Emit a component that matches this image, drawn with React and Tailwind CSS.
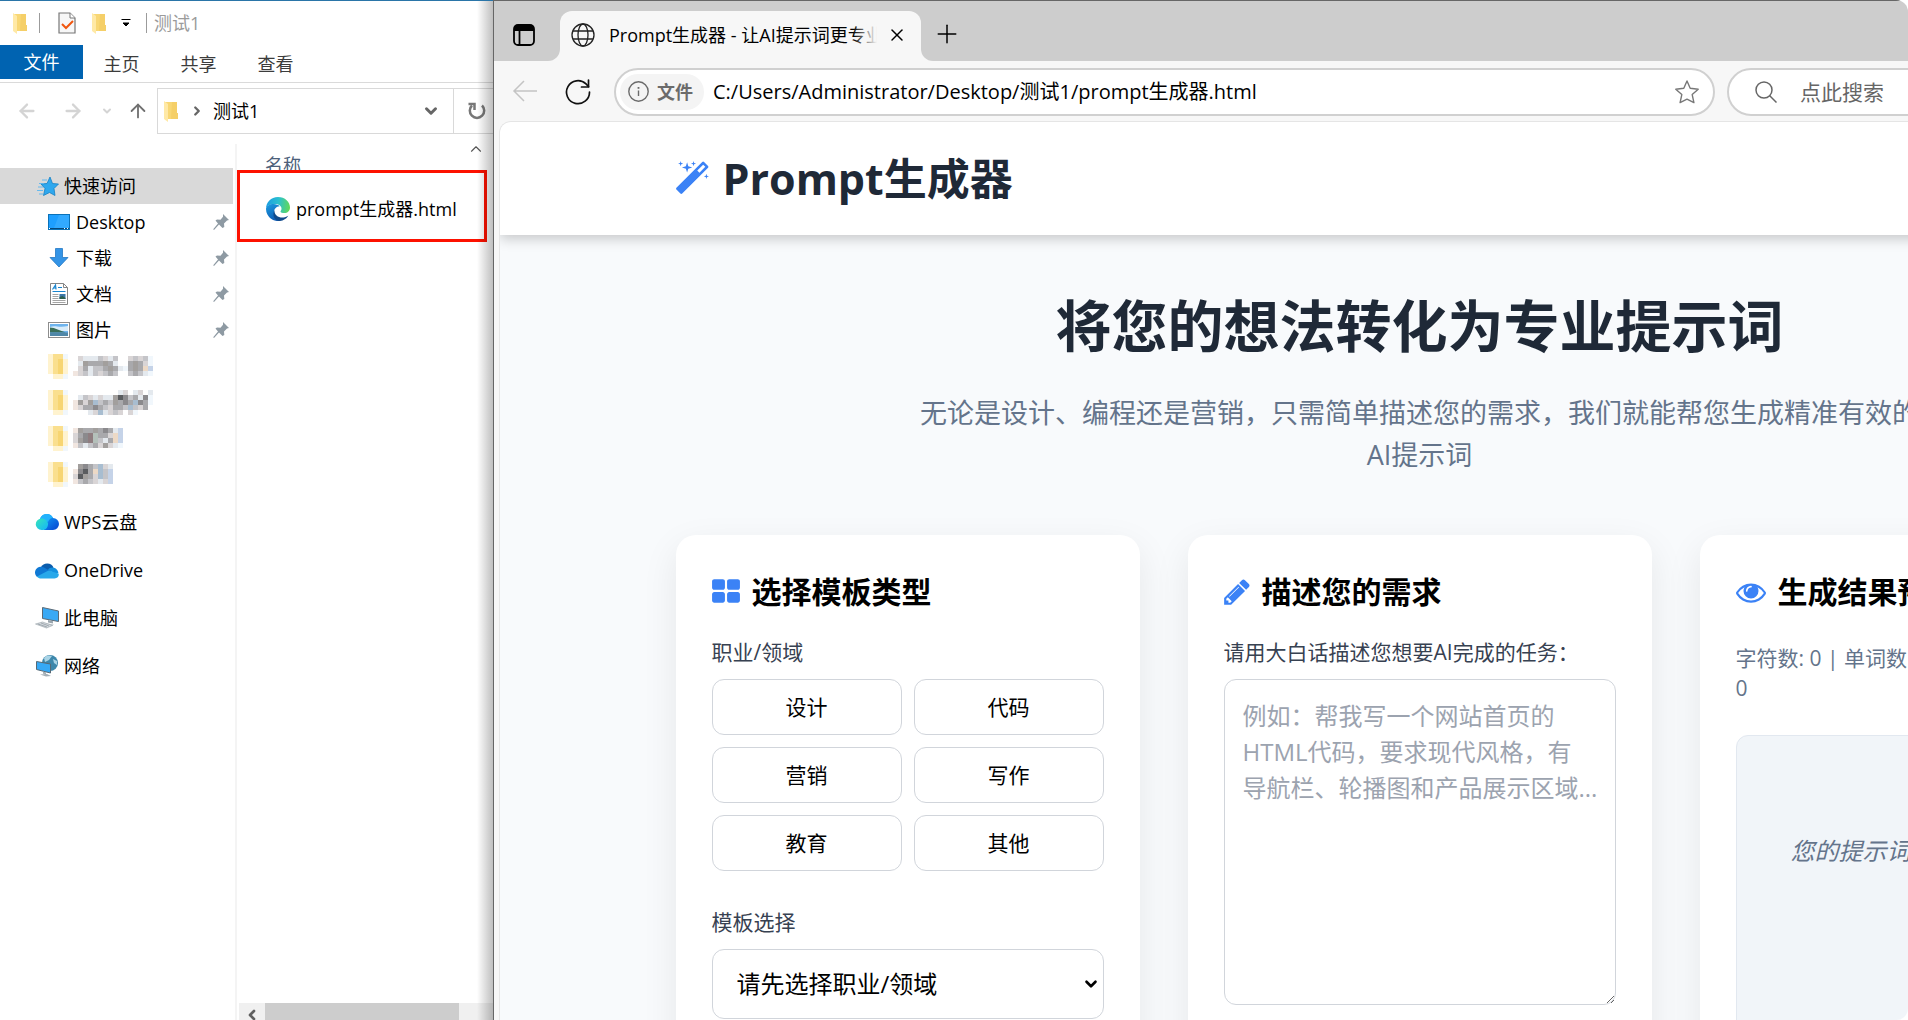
import { useState } from 'react';

import { Plus, X, ChevronDown, ChevronRight, ChevronLeft, ChevronUp, ArrowLeft, ArrowRight, ArrowUp } from 'lucide-react';

const FolderIcon = () => (
  <svg className="w-4 h-6 shrink-0" viewBox="0 0 16 24">
    <path d="M1 3h13v17H5z" fill="#f8d775" />
    <path d="M9 3h5v11h1v6H8z" fill="#f5cf68" />
    <path d="M1 2l4 3v18l-4-3z" fill="#ffe9a6" />
  </svg>
);

const CheckedDocIcon = () => (
  <svg className="w-5 h-6" viewBox="0 0 20 24">
    <path d="M2 2h11l5 5v15H2z" fill="#f7f7f7" stroke="#777" strokeWidth="1.2" />
    <path d="M13 2v5h5" fill="#fff" stroke="#777" strokeWidth="1" />
    <path d="M5 13l4 4 7-7" fill="none" stroke="#f0560f" strokeWidth="2" />
  </svg>
);

const EdgeIcon = () => (
  <svg className="w-6 h-6 shrink-0" viewBox="0 0 24 24">
    <defs>
      <linearGradient id="edge-top" x1="0" y1="0.4" x2="1" y2="0.5">
        <stop offset="0" stopColor="#1b9de2" />
        <stop offset="0.5" stopColor="#2bc0cf" />
        <stop offset="1" stopColor="#62d958" />
      </linearGradient>
      <linearGradient id="edge-left" x1="0" y1="0" x2="0.5" y2="1">
        <stop offset="0" stopColor="#1b9de2" />
        <stop offset="1" stopColor="#0f5cb4" />
      </linearGradient>
    </defs>
    <path d="M0 12C0 5 5 0 12 0s12 5 12 10.500c0 3.500-2.500 5.500-5.500 5.500-2 0-4-.5-4-1.500s1-1 1-3c0-2.500-3-4.500-6.500-4.500C4 7 0 9 0 12z" fill="url(#edge-top)" />
    <path d="M0 12c0-3 3.500-5 7.500-5 2.500 0 5 1 6.200 2.200C10 9.500 8 12 8 15c0 4 3.500 7.500 7 8.500A12 12 0 0 1 0 12z" fill="url(#edge-left)" />
    <path d="M8.500 13c-.5 5 4 8 9 7.500 2-.2 3.500-1 4.800-1.800C20 22.500 16 24 12.500 24 8 22.500 6 18 8.500 13z" fill="#114a8b" />
  </svg>
);

const StarBurstIcon = () => (
  <svg className="w-6 h-6" viewBox="0 0 24 24">
    <path d="M14 3l2.500 6.500 6 .5-4.500 4.500 1 7-5.500-3-6 3 1.500-7L5 10l6-.5z" fill="#2fa8ee" stroke="#1580c4" strokeWidth="0.800" />
    <path d="M6 6h5M3 9.500h5M2 13h5M1 16.500h6M3 20h4" stroke="#5bb6ee" strokeWidth="0.900" />
  </svg>
);

const DesktopIcon = () => (
  <svg className="w-6 h-6" viewBox="0 0 24 24">
    <rect x="1.500" y="4.500" width="21" height="15" fill="#1e9fff" stroke="#0b72b8" />
    <path d="M12 5h10v13H7z" fill="#3fb0ff" opacity="0.600" />
    <path d="M2 18.500h20" stroke="#06487a" />
    <path d="M2 18.500h1M17 18.500h1M20 18.500h1" stroke="#fff" />
  </svg>
);

const DownloadIcon = () => (
  <svg className="w-6 h-6" viewBox="0 0 24 24">
    <path d="M8.500 2.500h7v9h5.500L12 21 3 11.500h5.500z" fill="#3494e6" stroke="#2379c4" strokeWidth="0.800" />
  </svg>
);

const DocumentIcon = () => (
  <svg className="w-6 h-6" viewBox="0 0 24 24">
    <path d="M3.500 1.500h13l4 4v17h-17z" fill="#fff" stroke="#858585" />
    <path d="M16.500 1.500v4h4" fill="none" stroke="#858585" />
    <path d="M5.500 7.500l3-4.500.5 4.500M6.500 6h3" stroke="#1a86d0" fill="none" strokeWidth="1.200" />
    <path d="M11 5.500h4M5.500 9.500h13" stroke="#1a86d0" />
    <path d="M5.500 12.500h6M5.500 14.500h6M5.500 16.500h6M5.500 18.500h13M5.500 20.500h13" stroke="#a5a5a5" />
    <rect x="12.500" y="12" width="6" height="5" fill="#3b76a8" />
    <path d="M12.500 17v-2l3-1 3 2v1z" fill="#2c5f4e" />
  </svg>
);

const PictureIcon = () => (
  <svg className="w-6 h-6" viewBox="0 0 24 24">
    <rect x="1.500" y="4.500" width="21" height="15" fill="#fff" stroke="#8d8d8d" />
    <rect x="3" y="6" width="18" height="12" fill="#6eb4ee" />
    <path d="M3 9c5-2 9 1 18-1v5H3z" fill="#d8ecfa" />
    <path d="M3 9.500c5 0 10 3.500 16 5H3z" fill="#3a6e58" />
    <path d="M3 14.500h18V18H3z" fill="#4f87a8" />
  </svg>
);

const WpsCloudIcon = () => (
  <svg className="w-6 h-6" viewBox="0 0 24 24">
    <defs>
      <linearGradient id="wps-left" x1="0" y1="0" x2="1" y2="1">
        <stop offset="0" stopColor="#37e6b8" />
        <stop offset="1" stopColor="#14b4fb" />
      </linearGradient>
      <linearGradient id="wps-right" x1="0" y1="0" x2="1" y2="1">
        <stop offset="0" stopColor="#14b0ff" />
        <stop offset="1" stopColor="#0743d0" />
      </linearGradient>
    </defs>
    <path d="M5 9a7 7 0 0 1 13-1 6 6 0 0 1 0 12H9z" fill="url(#wps-right)" />
    <path d="M5 9a7 7 0 0 1 13-1c-3 0-4 2-5 4z" fill="#22b2fd" />
    <path d="M6.500 8.500c3.500 0 6 2.500 6.500 5 .3 3-2 6.500-5 6.500H6.500a5.750 5.750 0 0 1 0-11.500z" fill="url(#wps-left)" />
  </svg>
);

const OneDriveIcon = () => (
  <svg className="w-6 h-6" viewBox="0 0 24 24">
    <path d="M6 9a7 7 0 0 1 12.500.5L13 14z" fill="#0a5cad" />
    <path d="M0 15a6 6 0 0 1 8.500-5.800L17 14 2 19A6 6 0 0 1 0 15z" fill="#0f78d4" />
    <path d="M13 11.500c2-2.500 8-3.500 10.500 3l-3 2z" fill="#1490df" />
    <path d="M2 18.500l11.500-6 10 3c1 2-.5 5-4 5H6c-1.500 0-3-.5-4-2z" fill="#28a8ea" />
  </svg>
);

const ComputerIcon = () => (
  <svg className="w-6 h-6" viewBox="0 0 24 24">
    <path d="M7.500 1.500l16 3.500v10.500l-16-3z" fill="#39a9f5" stroke="#5d6a75" />
    <path d="M13 14l5 1.200v2.300l-5-1z" fill="#9aa5ad" />
    <path d="M10 17l9 1.500-2 1.500-8-1.500z" fill="#c7cdd2" />
    <path d="M.5 18l7-2 10 3.500-6 2.500z" fill="#d4d9dd" stroke="#98a2aa" strokeWidth="0.600" />
    <path d="M3 18l9 3M6 17l8 3" stroke="#8b959d" strokeWidth="0.700" />
  </svg>
);

const NetworkIcon = () => (
  <svg className="w-6 h-6" viewBox="0 0 24 24">
    <circle cx="15" cy="9" r="8" fill="#3d87ab" />
    <path d="M9 4c2-3 6-3 8-2l-3 4-4 2zM18 5l4 2v4l-3-2z" fill="#a9d4e6" />
    <path d="M1.500 7.500l14 2.500v9l-14-3.500z" fill="#36a9f6" stroke="#566975" />
    <path d="M8 17.500l3 .8v2l-3-.6zM5 20.500l7-.5 4 2-5 .5z" fill="#a5afb6" />
  </svg>
);

const PinIcon = () => (
  <svg className="w-4 h-4 shrink-0" viewBox="0 0 16 16">
    <path d="M10 0l6 6-2 .5-3 3 .3 3.500-1.800 1L6 10.500 1 16l-.8-.8L5 9.500 2.500 6.500l1.500-1 3.500.3 2.500-3z" fill="#8e9aa3" />
  </svg>
);

// small pixelated strips: every letter is one 5px cell
const CELL_COLORS = {
  a: '#f1e6e0',
  b: '#d9d5d6',
  c: '#a9a9ac',
  d: '#a29f9d',
  e: '#c4c4c8',
  f: '#e4e9ee',
  g: '#8b8a8d',
  h: '#5a5c5f',
  i: '#a8bdd0',
  j: '#c5d3e8',
  k: '#ecd9c6',
  l: '#f1f7fc',
  m: '#8f7d80',
  n: '#b4c0ba',
  y: '#fff3cf',
  x: '#fde6a4',
  w: '#fadf8e',
  v: '#f7d572',
};

const FOLDER_CELLS = ['ywwl', 'ywvy', 'ywvy', 'ywvy', '.yyl'];

const Mosaic = ({ rows }) => (
  <svg
    className="shrink-0"
    width={rows[0].length * 5}
    height={rows.length * 5}
    shapeRendering="crispEdges"
  >
    {rows.map((row, y) =>
      row.split('').map((cell, x) =>
        CELL_COLORS[cell] ? (
          <rect key={`${x}-${y}`} x={x * 5} y={y * 5} width="5" height="5" fill={CELL_COLORS[cell]} />
        ) : null
      )
    )}
  </svg>
);

const HIDDEN_FOLDERS = [
  ['.bfffebfe..bebel', '.fdcccdcf..cdcbl', '.bcfeecdcflcdckj', 'abefebece..ecefl'],
  ['.........fb.fb.f', '.febfbffdhgecfgl', 'adbdiecedcgcigcl', 'abccgcebcceiebc.', '...fbifbeb.bl...'],
  ['adccdcgcfj', 'bcgmnccbkj', 'bdgmnefckj', 'aefecbdbfl'],
  ['.dgceibf', 'aghckiej', 'bhdcbiej', 'aecebfbj'],
];

const QUICK_ITEMS = [
  { label: 'Desktop', Icon: DesktopIcon },
  { label: '下载', Icon: DownloadIcon },
  { label: '文档', Icon: DocumentIcon },
  { label: '图片', Icon: PictureIcon },
];

const ROOT_ITEMS = [
  { label: 'WPS云盘', Icon: WpsCloudIcon },
  { label: 'OneDrive', Icon: OneDriveIcon },
  { label: '此电脑', Icon: ComputerIcon },
  { label: '网络', Icon: NetworkIcon },
];

const Sidebar = () => (
  <nav className="w-[235px] shrink-0 pt-6">
    <button className="flex items-center w-[233px] h-9 gap-1 pl-9 bg-[#d9d9d9]">
      <StarBurstIcon />
      快速访问
    </button>
    {QUICK_ITEMS.map(({ label, Icon }) => (
      <button key={label} className="flex items-center w-full h-9 pl-[47px] pr-[6px]">
        <Icon />
        <span className="flex-1 pl-[5px] text-left">{label}</span>
        <PinIcon />
      </button>
    ))}
    {HIDDEN_FOLDERS.map((rows, i) => (
      <div key={i} className="flex items-center h-9 pl-12 gap-[5px]">
        <Mosaic rows={FOLDER_CELLS} />
        <Mosaic rows={rows} />
      </div>
    ))}
    <div className="flex flex-col gap-3 pt-3">
      {ROOT_ITEMS.map(({ label, Icon }) => (
        <button key={label} className="flex items-center h-9 gap-[5px] pl-[35px]">
          <Icon />
          {label}
        </button>
      ))}
    </div>
  </nav>
);

const Explorer = () => (
  <aside className="relative flex flex-col w-[493px] shrink-0 overflow-hidden bg-white border-t border-[#2a75a8] text-lg leading-6 text-black">
    <div className="flex items-center h-11 pl-3 shrink-0 text-[#9b9b9b]">
      <FolderIcon />
      <span className="w-px h-5 ml-[11px] bg-[#9b9b9b]" />
      <span className="ml-[17px]">
        <CheckedDocIcon />
      </span>
      <span className="ml-[14px]">
        <FolderIcon />
      </span>
      <svg className="w-3 h-3 ml-[13px]" viewBox="0 0 12 12">
        <path d="M1.500 2.500h9M3 6h6L6 9z" fill="#000" stroke="#000" />
      </svg>
      <span className="w-px h-5 ml-[14px] mr-[7px] bg-[#9b9b9b]" />
      测试1
    </div>
    <div className="flex h-[38px] shrink-0 border-b border-[#dadada] text-[#3c3c3c]">
      <button className="w-[83px] h-[34px] bg-[#0063b1] text-white">文件</button>
      <button className="w-[77px] h-[38px]">主页</button>
      <button className="w-[77px] h-[38px]">共享</button>
      <button className="w-[77px] h-[38px]">查看</button>
    </div>
    <div className="flex items-start h-[61px] pt-[5px] shrink-0">
      <div className="flex items-center w-[157px] h-[46px] pl-4 shrink-0 text-[#d4d4d4]">
        <ArrowLeft className="w-[22px] h-[22px]" strokeWidth={2.5} />
        <ArrowRight className="w-[22px] h-[22px] ml-6" strokeWidth={2.5} />
        <ChevronDown className="w-3 h-3 ml-[17px]" strokeWidth={4} />
        <ArrowUp className="w-[22px] h-[22px] ml-[14px] text-[#707070]" />
      </div>
      <div className="flex items-center flex-1 h-[46px] pl-[5px] border border-r-0 border-[#d9d9d9]">
        <FolderIcon />
        <ChevronRight className="w-[14px] h-[14px] ml-[11px] mr-[9px] text-[#666]" strokeWidth={4} />
        <span className="flex-1">测试1</span>
        <ChevronDown className="w-[18px] h-[18px] mr-[13px] text-[#666]" strokeWidth={4} />
        <button className="flex items-center justify-center w-10 h-full pl-[6px] border-l border-[#d9d9d9]" aria-label="刷新">
          <svg className="w-5 h-5" viewBox="0 0 20 20" fill="none" stroke="#777" strokeWidth="2.500">
            <path d="M15 4.500A7.200 7.200 0 1 1 5 4.500" />
            <path d="M1.500 3h6v6" />
          </svg>
        </button>
      </div>
    </div>
    <div className="flex flex-1 min-h-0">
      <Sidebar />
      <div className="flex flex-col flex-1 border-l-2 border-[#f4f4f4]">
        <div className="relative h-[26px] shrink-0">
          <ChevronUp className="absolute right-2 -top-[4px] w-[18px] h-[18px] text-[#555]" strokeWidth={1.5} />
          <div className="h-[26px] pt-[9px] pl-7 overflow-hidden text-[#4c607a]">名称</div>
        </div>
        <div className="flex items-center h-[72px] w-[250px] shrink-0 pl-[26px] pt-[5px] gap-[6px] border-3 border-[#fd1100] whitespace-nowrap">
          <EdgeIcon />
          prompt生成器.html
        </div>
        <div className="flex h-[17px] mt-auto ml-[2px] shrink-0 bg-[#f0f0f0] overflow-hidden">
          <span className="flex justify-center w-[26px] pt-1">
            <ChevronLeft className="w-4 h-4 text-[#606060]" strokeWidth={4} />
          </span>
          <span className="w-[194px] bg-[#cdcdcd]" />
        </div>
      </div>
    </div>
    <div className="absolute inset-y-0 right-0 w-4 bg-linear-to-r from-transparent to-black/25 pointer-events-none" />
  </aside>
);

const BrowserTabs = () => (
  <div className="flex h-[61px] pt-[10px] bg-[#cdcdcd] border-t border-[#666]">
    <div className="w-[66px] shrink-0 bg-[#f7f7f7]">
      <div className="flex items-center justify-center w-full h-full pr-[6px] pb-[3px] rounded-br-xl bg-[#cdcdcd]">
        <svg className="w-[22px] h-[22px]" viewBox="0 0 22 22">
          <rect x="1" y="1" width="20" height="20" rx="4" fill="none" stroke="#000" strokeWidth="1.800" />
          <path d="M1 7V4a3 3 0 0 1 3-3h14a3 3 0 0 1 3 3v3z" />
          <path d="M6.500 6v15" stroke="#000" strokeWidth="1.800" />
        </svg>
      </div>
    </div>
    <div className="w-[361px] shrink-0 bg-[#cdcdcd]">
      <div className="flex items-center h-full pl-[11px] pr-[14px] pb-[2px] rounded-t-xl bg-[#f7f7f7] text-lg leading-6 text-black">
        <svg className="w-6 h-6 shrink-0" viewBox="0 0 24 24" fill="none" stroke="#222" strokeWidth="1.300">
          <circle cx="12" cy="12" r="11" />
          <ellipse cx="12" cy="12" rx="5" ry="11" />
          <path d="M2 8h20M2 16h20" />
        </svg>
        <span className="relative w-[268px] ml-[14px] overflow-hidden whitespace-nowrap">
          Prompt生成器 - 让AI提示词更专业
          <span className="absolute inset-y-0 right-0 w-6 bg-linear-to-r from-transparent to-[#f7f7f7]" />
        </span>
        <button className="ml-auto" aria-label="关闭标签页">
          <X className="w-[20px] h-[20px]" strokeWidth={1.8} />
        </button>
      </div>
    </div>
    <div className="flex-1 bg-[#f7f7f7]">
      <div className="flex items-center h-full pl-[11px] pb-[5px] rounded-bl-xl bg-[#cdcdcd]">
        <button aria-label="新建标签页">
          <Plus className="w-[30px] h-[30px] text-black" strokeWidth={1.2} />
        </button>
      </div>
    </div>
  </div>
);

const BrowserToolbar = () => (
  <div className="flex items-center h-[60px] pl-[18px] pr-4 pt-[1px] bg-[#f7f7f7]">
    <svg className="w-[26px] h-[26px] shrink-0" viewBox="0 0 26 26" fill="none" stroke="#c4c4c4" strokeWidth="1.500">
      <path d="M25 12H1.500M12 2L2 12l10 10" />
    </svg>
    <svg className="w-[26px] h-[26px] ml-[27px] shrink-0" viewBox="0 0 26 26" fill="none" stroke="#111" strokeWidth="1.700" strokeLinecap="round">
      <path d="M24.500 13A11.500 11.500 0 1 1 21 4.900L23.500 7.500" />
      <path d="M23.500 1v7h-7" />
    </svg>
    <div className="flex items-center w-[1101px] h-12 ml-[23px] pl-1 pr-[14px] shrink-0 rounded-full border-2 border-[#d0d0d0] bg-white">
      <span className="flex items-center w-[84px] h-9 pl-2 gap-2 shrink-0 rounded-full bg-[#f4f4f4] text-lg leading-6 font-bold text-[#6b6b6b]">
        <svg className="w-[21px] h-[21px]" viewBox="0 0 21 21" fill="none" stroke="#6b6b6b" strokeWidth="1.400">
          <circle cx="10.500" cy="10.500" r="9.700" />
          <path d="M10.500 9.500v5.500" />
          <path d="M10.500 6v1.800" strokeWidth="1.800" />
        </svg>
        文件
      </span>
      <input
        type="text"
        aria-label="地址"
        defaultValue="C:/Users/Administrator/Desktop/测试1/prompt生成器.html"
        className="flex-1 ml-[9px] text-[20px] leading-8 text-black outline-none"
      />
      <svg className="w-6 h-6" viewBox="0 0 24 24" fill="none" stroke="#777" strokeWidth="1.400" strokeLinejoin="round">
        <path d="M12 1l3.200 7.300 8 .9-6 5.400 1.700 8-6.900-3.400-6.900 3.400 1.700-8-6-5.400 8-.9z" />
      </svg>
    </div>
    <div className="flex items-center flex-1 h-12 ml-3 pl-[26px] rounded-full border-2 border-[#d0d0d0] bg-white">
      <svg className="w-[22px] h-[22px] shrink-0" viewBox="0 0 22 22" fill="none" stroke="#666" strokeWidth="1.500">
        <circle cx="9" cy="9" r="8" />
        <path d="M14.500 14.500L21.500 21.500" />
      </svg>
      <input
        type="text"
        aria-label="搜索"
        placeholder="点此搜索"
        className="flex-1 ml-[23px] text-[21px] leading-8 placeholder:text-[#666] outline-none"
      />
    </div>
  </div>
);

const WandIcon = () => (
  <svg className="w-[33px] h-9" viewBox="91 0 1637 1792" fill="currentColor">
    <path d="M1254 581l293-293-107-107-293 293zm447-293q0 27-18 45l-1286 1286q-18 18-45 18t-45-18l-198-198q-18-18-18-45t18-45l1286-1286q18-18 45-18t45 18l198 198q18 18 18 45zm-1351-190l98 30-98 30-30 98-30-98-98-30 98-30 30-98zm350 162l196 60-196 60-60 196-60-196-196-60 196-60 60-196zm930 478l98 30-98 30-30 98-30-98-98-30 98-30 30-98zm-640-640l98 30-98 30-30 98-30-98-98-30 98-30 30-98z" />
  </svg>
);

const GridIcon = () => (
  <svg className="w-7 h-[30px]" viewBox="64 0 1664 1792" fill="currentColor">
    <path d="M832 1024v384q0 52-38 90t-90 38h-512q-52 0-90-38t-38-90v-384q0-52 38-90t90-38h512q52 0 90 38t38 90zm0-768v384q0 52-38 90t-90 38h-512q-52 0-90-38t-38-90v-384q0-52 38-90t90-38h512q52 0 90 38t38 90zm896 768v384q0 52-38 90t-90 38h-512q-52 0-90-38t-38-90v-384q0-52 38-90t90-38h512q52 0 90 38t38 90zm0-768v384q0 52-38 90t-90 38h-512q-52 0-90-38t-38-90v-384q0-52 38-90t90-38h512q52 0 90 38t38 90z" />
  </svg>
);

const PencilIcon = () => (
  <svg className="w-[26px] h-[30px]" viewBox="128 0 1536 1792" fill="currentColor">
    <path d="M491 1536l91-91-235-235-91 91v107h128v128h107zm523-928q0-22-22-22-10 0-17 7l-542 542q-7 7-7 17 0 22 22 22 10 0 17-7l542-542q7-7 7-17zm-54-192l416 416-832 832h-416v-416zm683 96q0 53-37 90l-166 166-416-416 166-165q36-38 90-38 53 0 91 38l235 234q37 39 37 91z" />
  </svg>
);

const EyeIcon = () => (
  <svg className="w-[30px] h-[30px]" viewBox="0 0 1792 1792" fill="currentColor">
    <path d="M1664 960q-152-236-381-353 61 104 61 225 0 185-131.500 316.500t-316.500 131.500-316.500-131.500-131.500-316.500q0-121 61-225-229 117-381 353 133 205 333.500 326.500t434.500 121.500 434.500-121.500 333.500-326.500zm-720-384q0-20-14-34t-34-14q-125 0-214.500 89.500t-89.500 214.500q0 20 14 34t34 14 34-14 14-34q0-86 61-147t147-61q20 0 34-14t14-34zm848 384q0 34-20 69-140 230-376.500 368.500t-499.500 138.500-499.500-139-376.500-368q-20-35-20-69t20-69q140-229 376.500-368t499.500-139 499.500 139 376.500 368q20 35 20 69z" />
  </svg>
);

const Card = ({ Icon, title, children }) => (
  <section className="flex-1 p-9 rounded-[20px] bg-white shadow-[0_12px_36px_rgba(0,0,0,0.08)]">
    <h2 className="flex items-center gap-3 mb-[23px] text-[30px] leading-[42px] font-bold text-black">
      <span className="text-[#3b82f6]">
        <Icon />
      </span>
      {title}
    </h2>
    {children}
  </section>
);

const FIELDS = ['设计', '代码', '营销', '写作', '教育', '其他'];

const PromptPage = () => {
  const [field, setField] = useState(null);
  const [text, setText] = useState('');

  return (
    <main className="h-full ml-[5px] overflow-hidden border-t border-l border-[#e5e5e5] rounded-tl-xl bg-[#f8fafc]">
      <header className="relative h-[113px] bg-white shadow-[0_4px_12px_rgba(0,0,0,0.2)]">
        <h1 className="flex items-center gap-[14px] w-[1488px] h-full mx-auto text-[43px] leading-[60px] font-bold text-[#1f2937]">
          <span className="text-[#3b82f6]">
            <WandIcon />
          </span>
          Prompt生成器
        </h1>
      </header>
      <div className="w-[1488px] mx-auto pt-12">
        <h2 className="mb-[25px] text-center text-[56px] leading-[84px] font-bold text-[#1f2937]">
          将您的想法转化为专业提示词
        </h2>
        <p className="max-w-[1010px] mx-auto mb-[59px] text-center text-[27px] leading-[42px] text-[#64748b]">
          无论是设计、编程还是营销，只需简单描述您的需求，我们就能帮您生成精准有效的AI提示词
        </p>
        <div className="flex gap-12">
          <Card Icon={GridIcon} title="选择模板类型">
            <p className="mb-[11px] text-[21px] leading-8 text-[#374151]">职业/领域</p>
            <div className="grid grid-cols-2 gap-3 mb-[35px]">
              {FIELDS.map((name) => (
                <button
                  key={name}
                  onClick={() => setField(name)}
                  aria-pressed={field === name}
                  className="h-14 border border-[#d1d5db] rounded-xl bg-white text-[21px] leading-8 text-black hover:bg-slate-50"
                >
                  {name}
                </button>
              ))}
            </div>
            <label htmlFor="template" className="block mb-[11px] text-[21px] leading-8 text-[#374151]">
              模板选择
            </label>
            <div className="relative">
              <select
                id="template"
                className="w-full h-[70px] pl-6 pr-10 border border-[#d1d5db] rounded-xl appearance-none bg-white text-2xl text-black"
              >
                <option>请先选择职业/领域</option>
              </select>
              <ChevronDown className="absolute right-1 top-[26px] w-[18px] h-[18px] text-black pointer-events-none" strokeWidth={3.5} />
            </div>
          </Card>
          <Card Icon={PencilIcon} title="描述您的需求">
            <label htmlFor="needs" className="block mb-[11px] text-[21px] leading-8 text-[#374151]">
              请用大白话描述您想要AI完成的任务：
            </label>
            <textarea
              id="needs"
              value={text}
              onChange={(e) => setText(e.target.value)}
              placeholder={'例如：帮我写一个网站首页的\nHTML代码，要求现代风格，有\n导航栏、轮播图和产品展示区域...'}
              className="block w-full h-[326px] py-[18px] pl-[18px] pr-3 border border-[#d1d5db] rounded-xl resize text-2xl leading-9 placeholder:text-[#9ca3af]"
            />
          </Card>
          <Card Icon={EyeIcon} title="生成结果预览">
            <p className="w-[184px] mt-[30px] mb-8 text-[21px] leading-[30px] text-[#64748b]">
              字符数: {text.length} | 单词数: {text.length}
            </p>
            <div className="h-[450px] pt-[97px] border border-[#e2e8f0] rounded-xl bg-[#f1f5f9] text-center text-2xl leading-9 italic text-[#64748b]">
              您的提示词将在这里显示...
            </div>
          </Card>
        </div>
      </div>
    </main>
  );
};

// the browser window runs past the right edge of the screen
const Browser = () => (
  <div className="flex-1 min-w-0 overflow-hidden border-l border-[#666] rounded-r-xl bg-[#f7f7f7]">
    <div className="flex flex-col w-[1845px] h-full">
      <BrowserTabs />
      <BrowserToolbar />
      <div className="flex-1 min-h-0">
        <PromptPage />
      </div>
    </div>
  </div>
);

export default function App() {
  return (
    <div className="flex h-screen overflow-hidden bg-white font-['Open_Sans','Noto_Sans_CJK_SC',sans-serif]">
      <Explorer />
      <Browser />
    </div>
  );
}
